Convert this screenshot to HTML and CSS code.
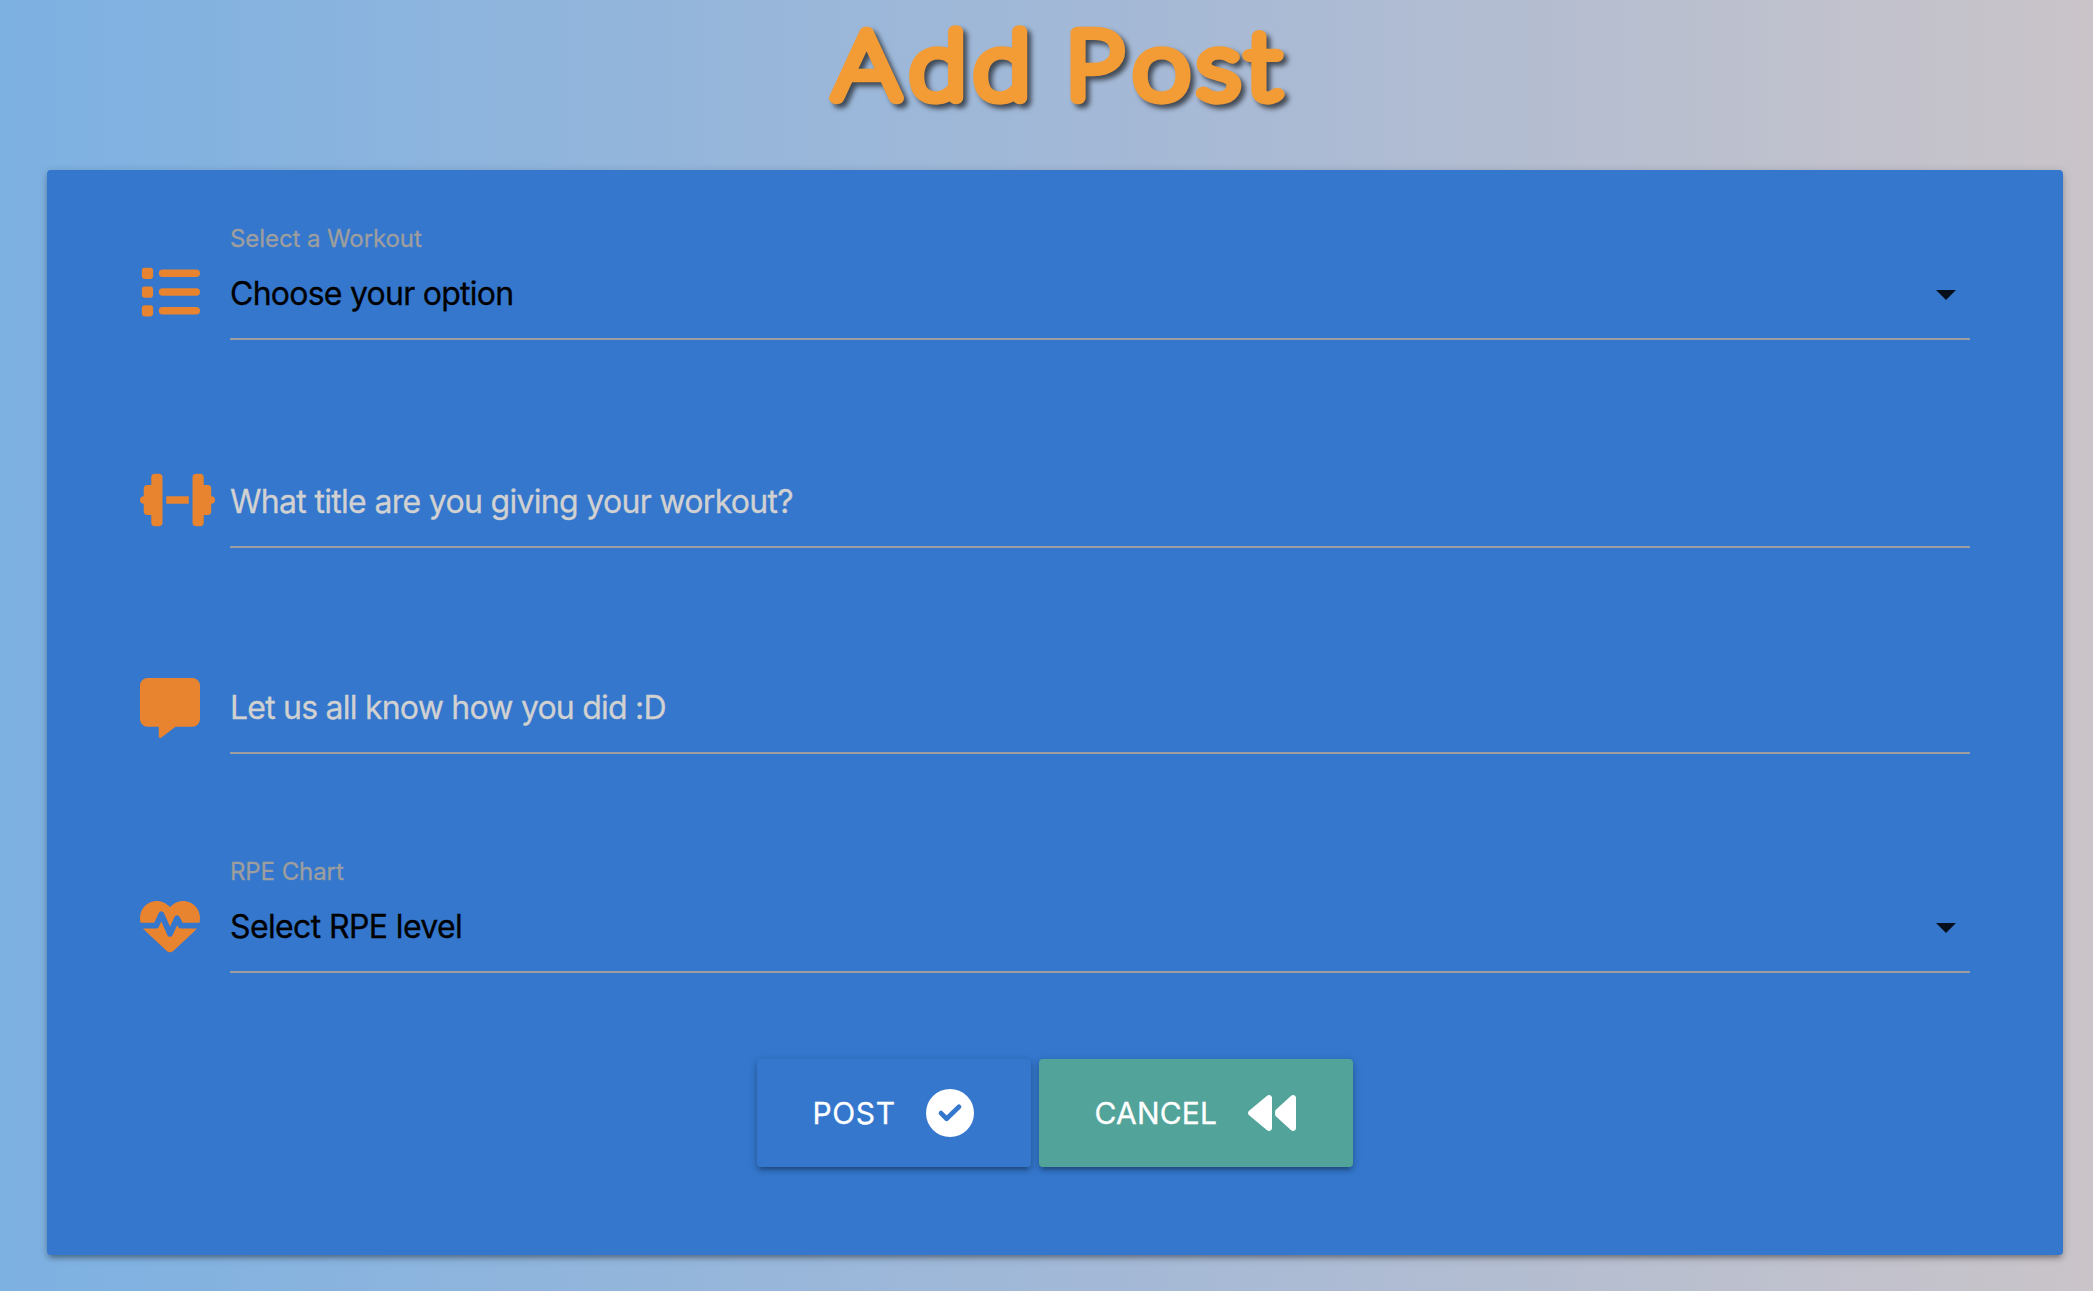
FILE: index.html
```html
<!DOCTYPE html>
<html lang="en">
<head>
<meta charset="utf-8">
<title>Add Post</title>
<link rel="stylesheet" href="styles.css">
</head>
<body>
<h1 class="title">
  <svg class="title-art" width="520" height="150" viewBox="0 0 520 150"><text transform="scale(1.12 1)" x="30.100 97.900 155.100 215 237 297.600 354.400 398.200" y="98">Add Post</text></svg>
</h1>
<main class="card">
  <form class="form">
    <div class="row row-select">
      <svg class="icon" viewBox="0 0 512 512"><rect x="16" y="48" width="96" height="96" rx="24"/><rect x="16" y="208" width="96" height="96" rx="24"/><rect x="16" y="368" width="96" height="96" rx="24"/><rect x="160" y="64" width="352" height="64" rx="32"/><rect x="160" y="224" width="352" height="64" rx="32"/><rect x="160" y="384" width="352" height="64" rx="32"/></svg>
      <div class="field">
        <label class="label">Select a Workout</label>
        <div class="control"><span class="value workout">Choose your option</span><svg class="caret" viewBox="0 0 20 10"><path d="M0 0h20L10 10z"/></svg></div>
      </div>
    </div>
    <div class="row row-title">
      <svg class="icon icon-wide" viewBox="0 0 640 512"><path d="M128 32h32a32 32 0 0 1 32 32v384a32 32 0 0 1-32 32h-32a32 32 0 0 1-32-32v-64H64a32 32 0 0 1-32-32v-64a32 32 0 0 1 0-64v-64a32 32 0 0 1 32-32h32V64a32 32 0 0 1 32-32zM512 32h-32a32 32 0 0 0-32 32v384a32 32 0 0 0 32 32h32a32 32 0 0 0 32-32v-64h32a32 32 0 0 0 32-32v-64a32 32 0 0 0 0-64v-64a32 32 0 0 0-32-32h-32V64a32 32 0 0 0-32-32zM224 224h192v64H224z"/></svg>
      <div class="field"><div class="control hint"><span class="value">What title are you giving your workout?</span></div></div>
    </div>
    <div class="row row-comment">
      <svg class="icon" viewBox="0 0 512 512"><path d="M64 0h384a64 64 0 0 1 64 64v288a64 64 0 0 1-64 64H304l-124.900 93.700c-7.900 5.700-19.100 0-19.100-9.700v-84H64a64 64 0 0 1-64-64V64A64 64 0 0 1 64 0z"/></svg>
      <div class="field"><div class="control hint"><span class="value comment">Let us all know how you did :D</span></div></div>
    </div>
    <div class="row row-rpe">
      <svg class="icon" viewBox="0 0 512 512"><path d="M0 191v-6C0 115.200 50.500 55.600 119.400 44.100 164.100 36.500 211.400 51.400 244 84l12 12 12-12c32.600-32.600 79-47.500 124.600-39.900C461.500 55.600 512 115.200 512 185v6c0 41.400-17.200 81.100-47.600 109.400L283.700 469.100a40 40 0 0 1-55.400 0L47.600 300.400C17.200 272.100 0 232.400 0 191z"/><path class="pulse" d="M-20 253H137L182 157 256 322 316 191 348 253H532"/></svg>
      <div class="field">
        <label class="label">RPE Chart</label>
        <div class="control"><span class="value rpe">Select RPE level</span><svg class="caret" viewBox="0 0 20 10"><path d="M0 0h20L10 10z"/></svg></div>
      </div>
    </div>
    <div class="actions">
      <button type="button" class="btn btn-post"><span>POST</span><svg class="btn-icon" viewBox="0 0 512 512"><circle cx="256" cy="256" r="256"/><path class="tick" d="M160 257L220 317 352 190"/></svg></button>
      <button type="button" class="btn btn-cancel"><span>CANCEL</span><svg class="btn-icon" viewBox="0 0 512 512"><path d="M11.500 281l192 160c20.600 17.200 52.500 2.800 52.500-25V96c0-27.400-31.900-41.800-52.500-24.600l-192 160c-15.300 12.800-15.300 36.800 0 49.600z"/><path d="M294 287l166 154c20.600 17.200 52 2.800 52-25V96c0-27.400-31.400-41.800-52-24.600L294 225c-7 8-7 54 0 62z"/></svg></button>
    </div>
  </form>
</main>
</body>
</html>
```
FILE: styles.css
```css
* { box-sizing: border-box; }
body {
  margin: 0;
  height: 1291px;
  overflow: hidden;
  font-family: Inter, "Liberation Sans", sans-serif;
  background: linear-gradient(90deg, #7db1e2 0%, #a5b9d6 55%, #cac4c9 100%);
}
.title { margin: 0; height: 170px; padding-left: 800px; }
.title-art { display: block; filter: drop-shadow(4px 4px 2.500px rgba(0, 0, 0, .6)); }
.title-art text {
  font: 100 92px Lato, sans-serif;
  fill: #f39c35;
  stroke: #f39c35;
  stroke-width: 12.400px;
  stroke-linejoin: round;
}
.card {
  width: 2016px;
  height: 1085px;
  margin-left: 47px;
  padding: 50px 93px 0;
  border-radius: 4px;
  background: #3477cd;
  box-shadow: 0 4px 4px rgba(0,0,0,.14), 0 6px 2px -4px rgba(0,0,0,.12), 0 2px 10px rgba(0,0,0,.2);
}
.row { display: flex; align-items: flex-end; height: 120px; }
.row-title { height: 90px; margin-top: 118px; }
.row-comment { height: 90px; margin-top: 116px; }
.row-rpe { margin-top: 99px; }
.icon { width: 60px; height: 60px; margin: 0 30px 18px 0; flex: none; fill: #e8832f; }
.icon-wide { width: 75px; margin-right: 15px; }
.row-comment .icon { margin-bottom: 16px; }
.row-rpe .icon { margin-bottom: 17px; }
.pulse { fill: none; stroke: #3477cd; stroke-width: 50; stroke-linejoin: round; }
.field { width: 1740px; }
.label { display: block; height: 30px; line-height: 38px; font-size: 24px; letter-spacing: -.080px; color: #9e9e9e; -webkit-text-stroke: .3px; }
.control {
  display: flex;
  align-items: center;
  justify-content: space-between;
  height: 90px;
  border-bottom: 2px solid #9e9e9e;
  font-size: 32px;
  color: #000;
  white-space: nowrap;
}
.value { padding-bottom: 2px; letter-spacing: -.690px; -webkit-text-stroke: .3px; }
.value.workout { letter-spacing: -.750px; }
.value.comment { letter-spacing: -.780px; }
.value.rpe { letter-spacing: -.620px; }
.hint { color: #d1d1d1; }
.caret { width: 20px; height: 10px; margin: 2px 14px 0 0; fill: #06101c; }
.actions { display: flex; justify-content: center; gap: 8px; margin-top: 86px; }
.btn {
  display: flex;
  align-items: center;
  justify-content: space-between;
  height: 108px;
  padding: 0 57px 0 55.500px;
  border: 0;
  border-radius: 4px;
  font: 400 30px Inter, sans-serif;
  letter-spacing: .600px;
  color: #fff;
  -webkit-text-stroke: .3px;
  box-shadow: 0 4px 4px rgba(0,0,0,.14), 0 6px 2px -4px rgba(0,0,0,.12), 0 2px 10px rgba(0,0,0,.2);
}
.btn-post { width: 274px; background: #3477cd; }
.btn-cancel { width: 314px; background: #52a399; letter-spacing: .200px; }
.btn-icon { width: 48px; height: 48px; fill: #fff; }
.tick { fill: none; stroke: #3477cd; stroke-width: 50; stroke-linecap: round; stroke-linejoin: round; }
```
